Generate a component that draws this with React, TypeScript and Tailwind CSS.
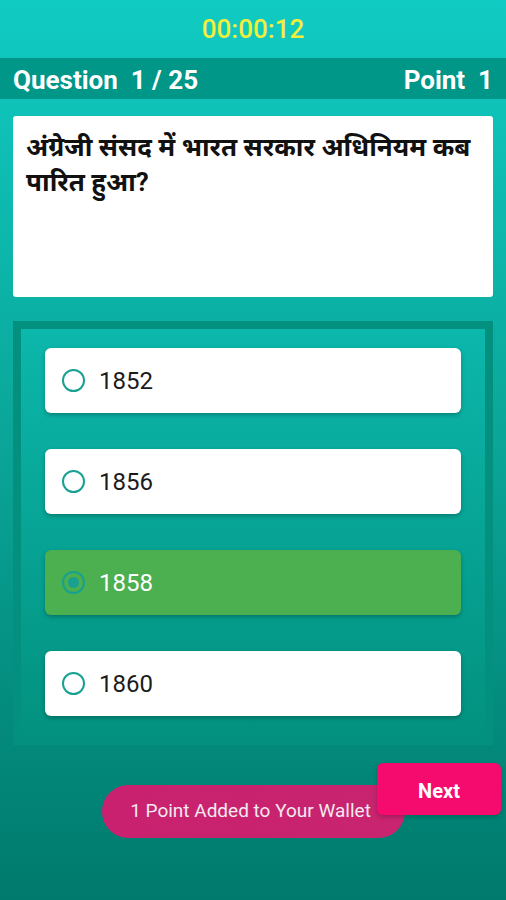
import React from "react";

const options = ["1852", "1856", "1858", "1860"];

function Radio({ checked }: { checked: boolean }) {
  return (
    <span className="flex h-[23px] w-[23px] shrink-0 items-center justify-center rounded-full border-[2.5px] border-[#18a091]">
      {checked && <span className="h-[11px] w-[11px] rounded-full bg-[#18a091]" />}
    </span>
  );
}

export default function App() {
  return (
    <div
      className="relative flex h-[900px] w-[506px] flex-col overflow-hidden bg-gradient-to-b from-[#10cbc3] via-[#0aa597] to-[#007a6c]"
      style={{ fontFamily: "Roboto, 'Noto Sans', 'Noto Sans Devanagari', sans-serif" }}
    >
      <div className="flex h-[58px] items-center justify-center text-[26px] font-medium text-[#f2ee3c]">
        00:00:12
      </div>
      <div className="flex h-[41px] items-center justify-between bg-[#009688] px-[13px] pt-[3px] text-[26px] font-bold text-white">
        <span className="whitespace-pre">Question  1 / 25</span>
        <span className="whitespace-pre">Point  1</span>
      </div>
      <div className="mx-[13px] mt-[17px] h-[181px] rounded-[3px] bg-white pl-[13px] pr-[10px] pt-[14px] text-[26px] font-bold leading-[35px] text-[#111]">
        अंग्रेजी संसद में भारत सरकार अधिनियम कब पारित हुआ?
      </div>
      <div className="mx-[13px] mt-[24px] h-[424px] border-[8px] border-[#03907f] bg-gradient-to-b from-[#0cb7ab] to-[#03917f] px-[24px] pt-[19px]">
        <div className="flex flex-col gap-[36px]">
          {options.map((o) => {
            const sel = o === "1858";
            return (
              <div
                key={o}
                className={`flex h-[65px] items-center gap-[14px] rounded-[6px] pl-[17px] text-[24px] shadow-[0_2px_4px_rgba(0,0,0,0.25)] ${
                  sel ? "bg-[#4caf50] text-white" : "bg-white text-[#1b1b1b]"
                }`}
              >
                <Radio checked={sel} />
                <span>{o}</span>
              </div>
            );
          })}
        </div>
      </div>
      <div className="relative mt-[18px] h-[80px]">
        <div className="absolute left-[102px] top-[22px] flex h-[53px] w-[303px] items-center justify-center rounded-full bg-gradient-to-r from-[#c9216f] to-[#c8246f] pr-[6px] text-[19px] text-[#f3e9f0]">
          1 Point Added to Your Wallet
        </div>
        <div className="absolute left-[377px] top-0 flex h-[52px] w-[124px] items-start justify-center rounded-[6px] bg-[#f50a6e] pt-[13px] text-[20px] font-bold text-white shadow-[0_2px_4px_rgba(0,0,0,0.2)]">
          Next
        </div>
      </div>
    </div>
  );
}
